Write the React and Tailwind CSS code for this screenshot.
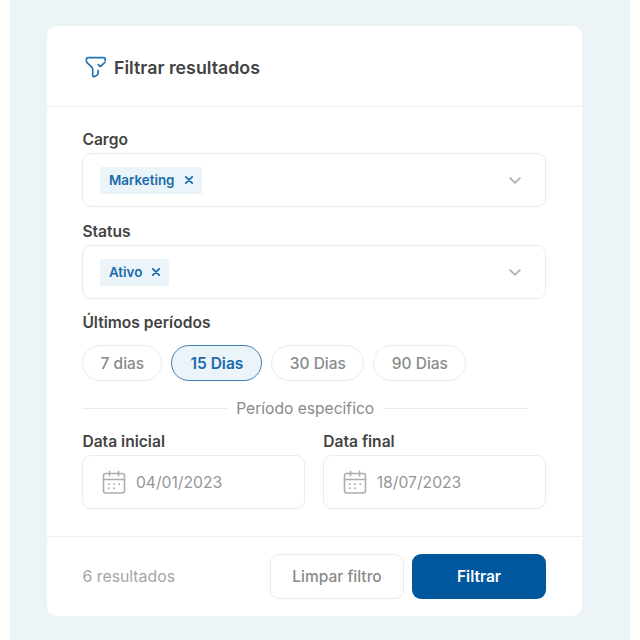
function FilterIcon() {
  return (
    <svg className="h-[22px] w-[22px] shrink-0" viewBox="0 0 22 22" fill="none" stroke="#2273b0" strokeWidth="1.7" strokeLinecap="round" strokeLinejoin="round">
      <path d="M20.200 4.600V3.400C20.200 2.300 19.600 1.600 18.500 1.600H3.100C2 1.600 1.400 2.300 1.400 3.400V5c0 .7.4 1.400.9 1.900l4.500 4.300c.6.6.9 1.200.9 2v6c0 1.200 1 1.700 1.900 1.200l2.600-1.500c.6-.4.9-.9.9-1.600v-3" />
      <path d="M13.200 8.500l2 2.100 4.700-4.300" />
    </svg>
  );
}

function CalendarIcon() {
  return (
    <svg className="h-6 w-6 shrink-0" viewBox="0 0 24 24" fill="none" stroke="#adadad" strokeWidth="1.6" strokeLinecap="round">
      <rect x="1.500" y="3.500" width="21" height="19.500" rx="2.200" />
      <path d="M1.500 9.500h21M7.500 1.200v4.600M16.500 1.200v4.600" />
      <path strokeWidth="1.900" d="M6.800 14h.01M12 14h.01M17.200 14h.01M6.800 18.300h.01M12 18.300h.01" />
    </svg>
  );
}

function Label({ children }) {
  return <div className="h-5 pt-px text-[15.600px] leading-5 font-semibold text-[#434343]">{children}</div>;
}

function SelectField({ label, value }) {
  return (
    <div>
      <Label>{label}</Label>
      <div className="mt-[4px] flex h-[54px] items-center justify-between rounded-[9px] border border-[#ebebeb] pr-[24px] pl-[16.500px]">
        <div className="flex h-[27px] items-center gap-[10px] rounded-[2px] bg-[#ebf4f9] px-[9px] text-[13.400px] font-semibold text-[#1a6bab]">
          <span className="pt-px">{value}</span>
          <svg className="h-[8px] w-[8px]" viewBox="0 0 8 8" stroke="currentColor" strokeWidth="1.700" strokeLinecap="round">
            <path d="M.8.8l6.400 6.400M7.200.8L.8 7.200" />
          </svg>
        </div>
        <svg className="h-[7px] w-[12px]" viewBox="0 0 12 7" fill="none" stroke="#b0b0b0" strokeWidth="1.800" strokeLinecap="round" strokeLinejoin="round">
          <path d="M1.200 1.200L6 5.800l4.800-4.600" />
        </svg>
      </div>
    </div>
  );
}

function Pill({ children, width, active }) {
  const tone = active
    ? "border-[#3d7fb8] bg-[#ebf4f9] text-[#1a6bab] font-semibold"
    : "border-[#ebebeb] text-[#8a8a8a] font-medium";
  return (
    <button className={"flex h-9 items-center justify-center rounded-full border pt-px text-[15.500px] " + width + " " + tone}>
      {children}
    </button>
  );
}

function DateField({ label, value }) {
  return (
    <div className="flex-1">
      <Label>{label}</Label>
      <div className="mt-[4px] flex h-[54px] items-center gap-[10px] rounded-[9px] border border-[#ebebeb] pl-[18.500px] text-[15.700px] text-[#969696]">
        <CalendarIcon />
        <span className="pt-px">{value}</span>
      </div>
    </div>
  );
}

export default function App() {
  return (
    <div className="h-[640px] w-[640px] bg-white pr-[10px] pl-[10px] font-['Inter',sans-serif]">
      <div className="h-full bg-[#ecf4f8] pt-[26px] pl-[37px]">
        <div className="flex h-[590px] w-[535px] flex-col rounded-[9px] bg-white">
          <header className="flex h-[81px] items-center gap-[7px] border-b border-[#efefef] pt-[2px] pl-[38px]">
            <FilterIcon />
            <h1 className="pt-[2px] text-[17.800px] font-semibold text-[#434343]">Filtrar resultados</h1>
          </header>
          <main className="h-[429px] pt-[22px] pr-[36px] pl-[35.400px]">
            <div className="flex flex-col gap-[14px]">
              <SelectField label="Cargo" value="Marketing" />
              <SelectField label="Status" value="Ativo" />
            </div>
            <div className="mt-[13px]">
              <Label>Últimos períodos</Label>
            </div>
            <div className="mt-[13px] flex gap-[9px]">
              <Pill width="w-[80px]">7 dias</Pill>
              <Pill width="w-[91px]" active>15 Dias</Pill>
              <Pill width="w-[93px]">30 Dias</Pill>
              <Pill width="w-[93px]">90 Dias</Pill>
            </div>
            <div className="mt-[17px] mr-[18px] flex h-5 items-center gap-[9px] text-[15.600px] leading-5 text-[#8a8a8a]">
              <span className="h-px flex-1 bg-[#ebebeb]" />
              <span className="pt-[2px]">Período especifico</span>
              <span className="h-px flex-1 bg-[#ebebeb]" />
            </div>
            <div className="mt-[13px] flex gap-[18px]">
              <DateField label="Data inicial" value="04/01/2023" />
              <DateField label="Data final" value="18/07/2023" />
            </div>
          </main>
          <footer className="flex flex-1 items-center border-t border-[#efefef] pr-[36px] pl-[35.500px] text-[15.500px]">
            <span className="flex-1 text-[15.800px] text-[#a6a6a6]">6 resultados</span>
            <button className="h-[45px] w-[134px] rounded-[9px] border border-[#ebebeb] font-medium text-[#8a8a8a]">Limpar filtro</button>
            <button className="ml-[8px] h-[45px] w-[134px] rounded-[9px] bg-[#00579d] font-semibold text-white">Filtrar</button>
          </footer>
        </div>
      </div>
    </div>
  );
}
